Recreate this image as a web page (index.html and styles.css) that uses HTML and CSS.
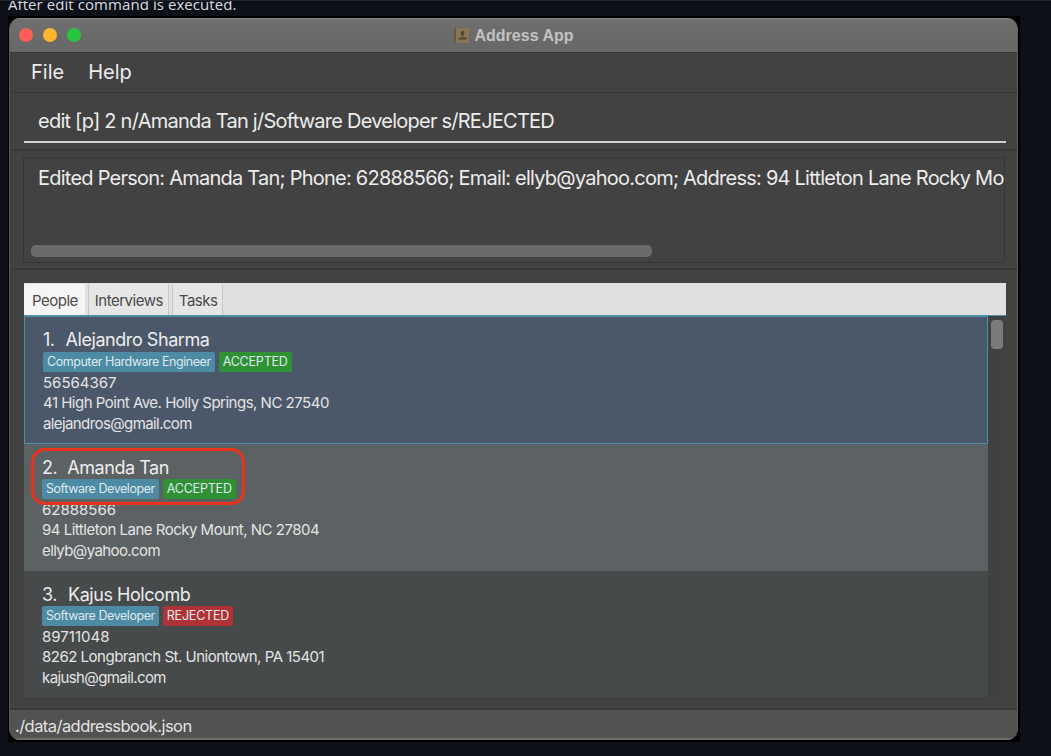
FILE: index.html
```html
<!DOCTYPE html>
<html lang="en">
<head>
<meta charset="utf-8">
<title>Address App</title>
<link rel="stylesheet" href="styles.css">
</head>
<body>
<p class="caption"><span>After edit command is executed.</span></p>
<div class="frame">
  <main class="window">
    <header class="titlebar">
      <div class="lights"><i class="light red"></i><i class="light yellow"></i><i class="light green"></i></div>
      <div class="title">
        <svg class="app-icon" width="15" height="15" viewBox="0 0 15 15"><rect width="15" height="15" fill="#8a7654"/><rect width="2" height="15" fill="#655a48"/><circle cx="8.500" cy="5" r="1.900" fill="#4c432f"/><path d="M7.600 6.500h1.800v2h-1.800z" fill="#4c432f"/><path d="M4.500 9.500h8v2h-8z" fill="#4c432f"/></svg>
        <span>Address App</span>
      </div>
    </header>
    <nav class="menubar"><span>File</span><span>Help</span></nav>
    <section class="command"><div class="command-input">edit [p] 2 n/Amanda Tan j/Software Developer s/REJECTED</div></section>
    <section class="result">
      <div class="result-box">
        <div class="result-text">Edited Person: Amanda Tan; Phone: 62888566; Email: ellyb@yahoo.com; Address: 94 Littleton Lane Rocky Mount, NC 27804</div>
        <div class="hscroll"></div>
      </div>
    </section>
    <section class="content">
      <div class="tabs">
        <div class="tab active">People</div>
        <div class="tab">Interviews</div>
        <div class="tab">Tasks</div>
      </div>
      <div class="list-wrap">
        <div class="list">
          <article class="card selected">
            <h2><span>1.</span><span>Alejandro Sharma</span></h2>
            <div class="tags"><span class="tag job">Computer Hardware Engineer</span><span class="tag ok">ACCEPTED</span></div>
            <p class="phone">56564367</p><p class="address">41 High Point Ave. Holly Springs, NC 27540</p><p class="email">alejandros@gmail.com</p>
          </article>
          <article class="card even">
            <div class="highlight"></div>
            <h2><span>2.</span><span>Amanda Tan</span></h2>
            <div class="tags"><span class="tag job">Software Developer</span><span class="tag ok">ACCEPTED</span></div>
            <p class="phone">62888566</p><p class="address">94 Littleton Lane Rocky Mount, NC 27804</p><p class="email">ellyb@yahoo.com</p>
          </article>
          <article class="card odd">
            <h2><span>3.</span><span>Kajus Holcomb</span></h2>
            <div class="tags"><span class="tag job">Software Developer</span><span class="tag bad">REJECTED</span></div>
            <p class="phone">89711048</p><p class="address">8262 Longbranch St. Uniontown, PA 15401</p><p class="email">kajush@gmail.com</p>
          </article>
        </div>
        <div class="vscroll"><div class="thumb"></div></div>
      </div>
    </section>
    <footer class="status">./data/addressbook.json</footer>
  </main>
</div>
</body>
</html>
```
FILE: styles.css
```css
* { box-sizing: border-box; }
html, body { margin: 0; height: 756px; overflow: hidden; }
body {
  background: #0d1117;
  border-top: 1px solid #1d242e;
  font-family: Inter, "Liberation Sans", sans-serif;
  color: #e6e6e6;
}
.caption {
  margin: 0 0 0 8px;
  height: 15px;
  overflow: hidden;
  font: 15px/15px "Open Sans", sans-serif;
  letter-spacing: 0.07px;
  color: #d8dde3;
}
.caption span { display: block; margin-top: -4px; }
.frame {
  margin-left: 8px;
  width: 1012px;
  height: 726px;
  background: #000;
  padding: 2px 2px 2px 1px;
}
.window {
  height: 722px;
  border-radius: 11px;
  overflow: hidden;
  background: #424242;
  display: flex;
  flex-direction: column;
  border-left: 1px solid #5c5c5c;
  border-right: 1px solid #5c5c5c;
}
.titlebar {
  height: 35px;
  flex: none;
  background: linear-gradient(#6f6f6f, #676767);
  border-top: 1px solid #858585;
  border-bottom: 1px solid #363636;
  position: relative;
  display: flex;
  align-items: center;
  justify-content: center;
}
.lights { position: absolute; left: 9px; top: 9px; display: flex; gap: 10px; }
.light { width: 14px; height: 14px; border-radius: 50%; display: block; }
.red { background: #fb5f57; }
.yellow { background: #fdb52e; }
.green { background: #28c63f; }
.title { display: flex; align-items: center; gap: 6px; font: 700 16px "Liberation Sans", sans-serif; color: #c2c2c2; }
.menubar {
  height: 40px;
  flex: none;
  display: flex;
  gap: 24px;
  align-items: center;
  padding: 0 0 2px 21px;
  font-size: 20px;
  border-bottom: 1px solid #373737;
  color: #ececec;
}
.command {
  height: 58px;
  flex: none;
  padding: 10px 11px 0 14px;
  border-bottom: 2px solid #383838;
}
.command-input {
  height: 40px;
  padding-left: 14px;
  border-bottom: 2px solid #cfcfcf;
  font-size: 20px;
  line-height: 36px;
  letter-spacing: -0.76px;
  color: #ececec;
  white-space: nowrap;
}
.result {
  height: 119px;
  flex: none;
  padding: 6px 12px 5px 13px;
  border-bottom: 2px solid #383838;
}
.result-box {
  height: 106px;
  border: 1px solid #363636;
  overflow: hidden;
  padding: 7px 0 0 14px;
}
.result-text {
  width: 966px;
  overflow: hidden;
  white-space: nowrap;
  font-size: 20px;
  line-height: 26px;
  letter-spacing: -0.76px;
  color: #ececec;
}
.hscroll {
  width: 621px;
  height: 12px;
  margin: 54px 0 0 -7px;
  border-radius: 5px;
  background: #6b6b6b;
}
.content {
  flex: 1;
  padding: 13px 11px 11px 14px;
  display: flex;
  flex-direction: column;
  min-height: 0;
  border-bottom: 2px solid #383838;
}
.tabs {
  height: 33px;
  flex: none;
  display: flex;
  gap: 3px;
  background: #e0e0e0;
  border-bottom: 1px solid #4f8fa3;
  padding-top: 1px;
  font-size: 15px;
  letter-spacing: -0.5px;
}
.tab {
  background: #e6e6e6;
  color: #4a4a4a;
  padding: 0 5px 0 6px;
  line-height: 34px;
  border-right: 1px solid #c6c6c6;
  border-left: 1px solid #c6c6c6;
  border-radius: 2px 2px 0 0;
}
.tab.active { background: #f5f5f5; border: 0; padding: 0 7px 0 8px; }
.list-wrap { flex: 1; display: flex; min-height: 0; background: #414141; }
.list { width: 964px; flex: none; overflow: hidden; background: #464a4b; }
.card { height: 127px; padding: 12px 0 0 18px; position: relative; }
.card.selected { background: #4b586a; border: 1px solid #4f8fa3; height: 128px; padding-top: 11px; }
.card.even { background: #5c6163; }
.card.odd { background: #464a4b; }
.card h2 { margin: 0; font-size: 18px; font-weight: 400; line-height: 24px; display: flex; gap: 11px; letter-spacing: -0.45px; color: #ededed; }
.card.even h2 { gap: 10px; }
.card.even h2, .card.odd h2 { margin-bottom: -1px; }
.card p { margin: 0; font-size: 15px; line-height: 20.500px; color: #e4e4e4; }
.card .address { letter-spacing: -0.5px; }
.card .email { letter-spacing: -0.6px; }
.tags { display: flex; gap: 4px; margin-bottom: 0.500px; }
.tag { font-size: 12.500px; line-height: 20px; height: 20px; padding: 0 4px; border-radius: 2px; color: #dfe9ee; }
.job { background: #4c8ba3; letter-spacing: -0.45px; }
.ok { background: #2f9134; letter-spacing: -0.2px; }
.bad { background: #b13234; letter-spacing: -0.2px; }
.highlight {
  position: absolute;
  left: 7px;
  top: 4px;
  width: 214px;
  height: 57px;
  border: 3px solid #e8321a;
  border-radius: 14px;
  z-index: 1;
}
.vscroll { flex: 1; padding: 4px 3px 0 3px; }
.thumb { width: 12px; height: 29px; border-radius: 4px; background: #7b7b7b; }
.status {
  height: 30px;
  flex: none;
  background: #525252;
  border-bottom: 2px solid #6d6d6d;
  padding-left: 5px;
  font-size: 16.500px;
  line-height: 32px;
  letter-spacing: -0.55px;
  color: #e2e2e2;
}
```
